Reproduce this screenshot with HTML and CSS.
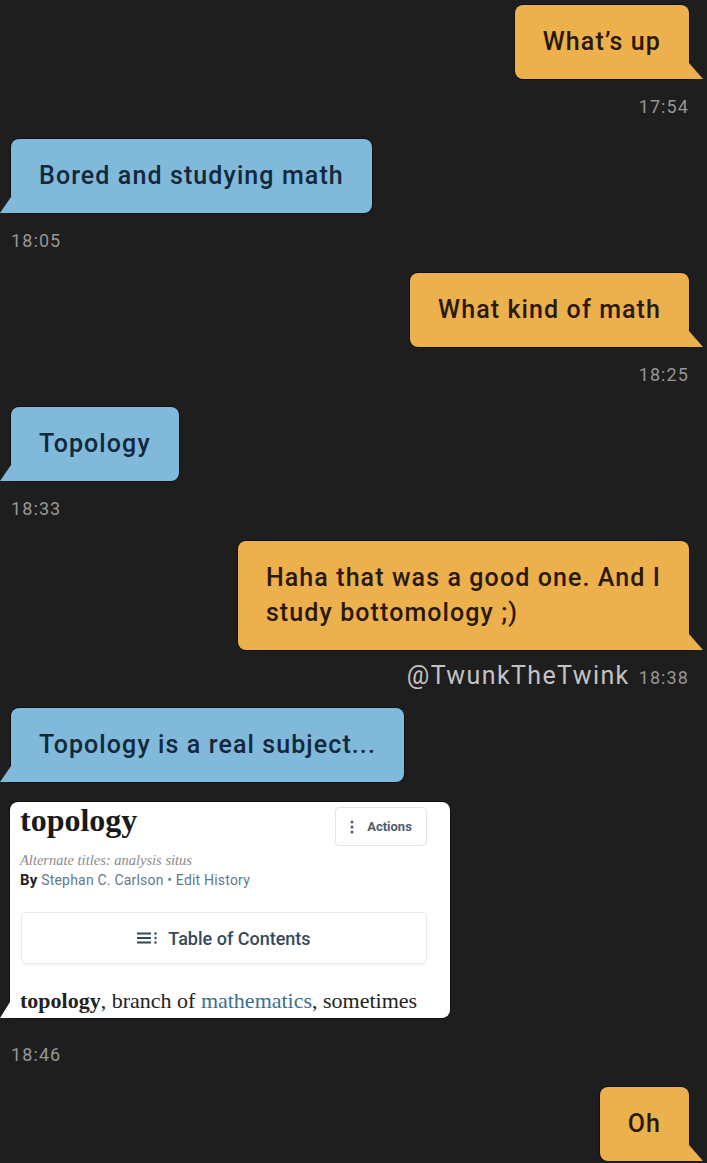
FILE: index.html
```html
<!DOCTYPE html>
<html lang="en">
<head>
<meta charset="utf-8">
<title>Chat</title>
<link rel="stylesheet" href="styles.css">
</head>
<body>
<main class="chat">
  <div class="msg out">
    <div class="bubble orange">What’s up</div>
    <div class="meta"><span class="time">17:54</span></div>
  </div>

  <div class="msg in">
    <div class="bubble blue">Bored and studying math</div>
    <div class="meta"><span class="time">18:05</span></div>
  </div>

  <div class="msg out">
    <div class="bubble orange">What kind of math</div>
    <div class="meta"><span class="time">18:25</span></div>
  </div>

  <div class="msg in">
    <div class="bubble blue">Topology</div>
    <div class="meta"><span class="time">18:33</span></div>
  </div>

  <div class="msg out">
    <div class="bubble orange">Haha that was a good one. And I<br>study bottomology ;)</div>
    <div class="meta meta-mark"><span class="mark">@TwunkTheTwink</span><span class="time">18:38</span></div>
  </div>

  <div class="msg in">
    <div class="bubble blue">Topology is a real subject...</div>
    <div class="card">
      <div class="card-head">
        <h1 class="card-title">topology</h1>
        <div class="actions">
          <svg class="dots" width="4" height="14" viewBox="0 0 4 14"><circle cx="2" cy="2" r="1.5"/><circle cx="2" cy="7" r="1.5"/><circle cx="2" cy="12" r="1.5"/></svg>
          <span>Actions</span>
        </div>
      </div>
      <p class="alt">Alternate titles: analysis situs</p>
      <p class="byline"><b>By</b> Stephan C. Carlson • Edit History</p>
      <div class="toc">
        <svg class="toc-icon" width="21" height="14" viewBox="0 0 21 14"><path d="M0 2.5h14M0 7h14M0 11.5h14" stroke="#34495e" stroke-width="2"/><circle cx="18.5" cy="2.5" r="1.2" fill="#34495e"/><circle cx="18.5" cy="7" r="1.2" fill="#34495e"/><circle cx="18.5" cy="11.5" r="1.2" fill="#34495e"/></svg>
        <span>Table of Contents</span>
      </div>
      <p class="lead"><b>topology</b>, branch of <span class="link">mathematics</span>, sometimes</p>
    </div>
    <div class="meta meta-card"><span class="time">18:46</span></div>
  </div>

  <div class="msg out">
    <div class="bubble orange">Oh</div>
  </div>
</main>
</body>
</html>
```

FILE: styles.css
```css
html, body {
  margin: 0;
  background: #1f1e1e;
}

.chat {
  display: flex;
  flex-direction: column;
  gap: 22px;
  padding: 5px 18px 0 11px;
  font-family: Roboto, "Liberation Sans", sans-serif;
}

.msg {
  display: flex;
  flex-direction: column;
}

.msg.out { align-items: flex-end; }
.msg.in { align-items: flex-start; }

.bubble {
  position: relative;
  padding: 19px 28px 20px;
  font-size: 25px;
  font-weight: 500;
  line-height: 35px;
  letter-spacing: 1.1px;
  border-radius: 8px;
  box-shadow: 0 0 0 1px #121010;
}

.bubble.orange {
  background: #ecb14c;
  color: #2a190b;
  border-bottom-right-radius: 0;
}

.bubble.blue {
  background: #80b9da;
  color: #12283c;
  border-bottom-left-radius: 0;
}

.bubble.orange::after,
.bubble.blue::after,
.card::after {
  content: "";
  position: absolute;
  bottom: 0;
  height: 16px;
}

.bubble.orange::after {
  right: -14px;
  width: 14px;
  background: #ecb14c;
  clip-path: polygon(0 0, 100% 100%, 0 100%);
}

.bubble.blue::after {
  left: -11px;
  width: 11px;
  background: #80b9da;
  clip-path: polygon(100% 0, 100% 100%, 0 100%);
}

.meta {
  display: flex;
  align-items: baseline;
  gap: 9px;
  margin-top: 18px;
  height: 20px;
  line-height: 20px;
}

.time {
  font-size: 18px;
  letter-spacing: 1.1px;
  color: #979595;
}

.meta-mark { margin-top: 16px; }

.mark {
  font-size: 25px;
  color: #c4c3c3;
  letter-spacing: 1.4px;
}

/* Encyclopedia card */
.card {
  position: relative;
  margin-top: 20px;
  margin-left: -1px;
  width: 440px;
  box-sizing: border-box;
  padding: 0 23px 5px 10px;
  background: #ffffff;
  border-radius: 8px 8px 8px 0;
  box-shadow: 0 0 0 1px #121010;
}

.card::after {
  left: -10px;
  width: 10px;
  background: #ffffff;
  clip-path: polygon(100% 0, 100% 100%, 0 100%);
}

.card-head {
  display: flex;
  justify-content: space-between;
  align-items: flex-start;
}

.card-title {
  margin: 0;
  font-family: "Liberation Serif", Georgia, serif;
  font-size: 32px;
  font-weight: 700;
  line-height: 36px;
  color: #1a1a1a;
}

.actions {
  margin-top: 5px;
  width: 92px;
  height: 39px;
  box-sizing: border-box;
  border: 1px solid #e3e5e8;
  border-radius: 4px;
  display: flex;
  align-items: center;
  justify-content: center;
  gap: 13px;
  font-family: Roboto, "Liberation Sans", sans-serif;
  font-size: 13px;
  font-weight: 700;
  color: #4d5d6e;
}

.dots { fill: #4d5d6e; }

.alt {
  margin: 6px 0 0;
  font-family: "Liberation Serif", Georgia, serif;
  font-style: italic;
  font-size: 14.5px;
  line-height: 16px;
  color: #8a8a8a;
}

.byline {
  margin: 4px 0 0;
  font-family: Roboto, "Liberation Sans", sans-serif;
  font-size: 14px;
  letter-spacing: 0.2px;
  line-height: 16px;
  color: #5f7890;
}

.byline b {
  font-size: 15px;
  color: #222;
}

.toc {
  margin-top: 24px;
  margin-left: 1px;
  height: 52px;
  box-sizing: border-box;
  border: 1px solid #e6e8eb;
  border-radius: 5px;
  box-shadow: 0 1px 3px rgba(0, 0, 0, 0.06);
  display: flex;
  align-items: center;
  justify-content: center;
  gap: 10px;
  font-family: Roboto, "Liberation Sans", sans-serif;
  font-size: 18px;
  font-weight: 500;
  color: #34495e;
}

.lead {
  margin: 24px 0 0;
  font-family: "Liberation Serif", Georgia, serif;
  font-size: 22px;
  line-height: 25px;
  color: #222;
}

.link { color: #3d6e8e; }

.meta-card { margin-top: 27px; }
```
